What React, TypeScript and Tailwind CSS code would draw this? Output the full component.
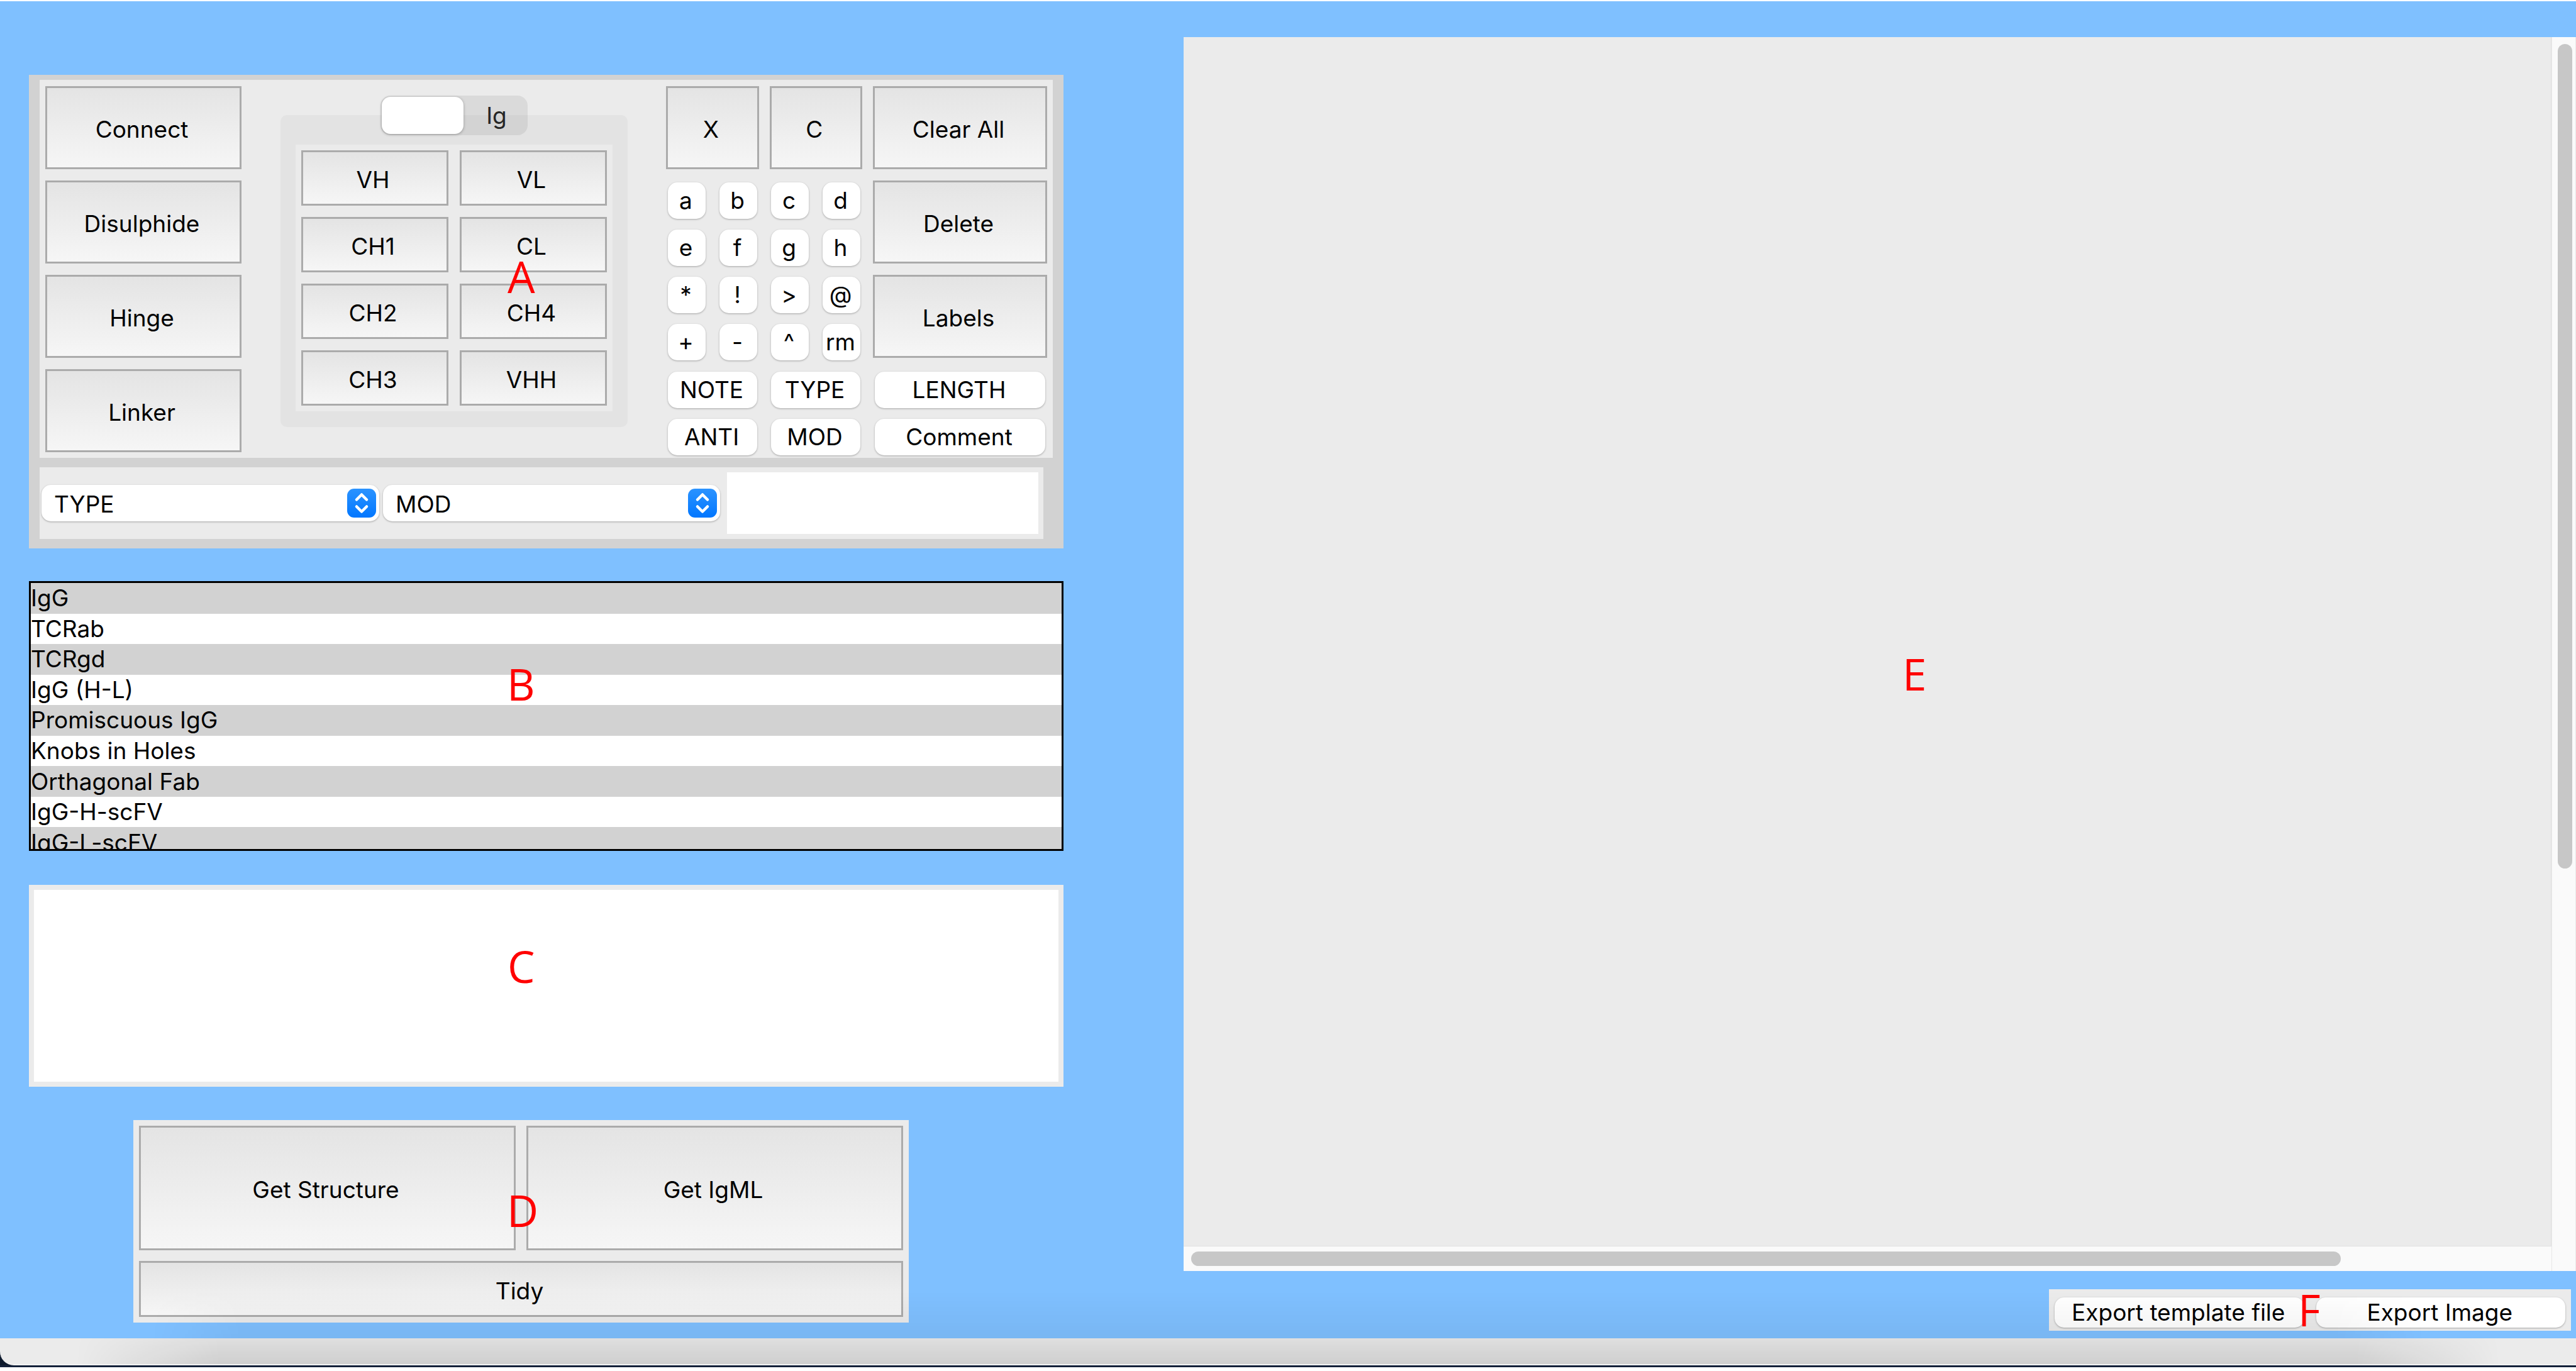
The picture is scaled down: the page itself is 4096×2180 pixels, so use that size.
import React from "react";

const FONT = "font-['Inter',sans-serif]";

function Flat({ children, className = "" }: { children: React.ReactNode; className?: string }) {
  return (
    <button
      type="button"
      className={`flex items-center justify-center border-[3px] border-[#ababab] bg-gradient-to-b from-[#e4e4e4] to-[#f6f6f6] pr-[5px] pt-[6px] ${className}`}
    >
      {children}
    </button>
  );
}

function Pill({ children, className = "h-[58px]" }: { children: React.ReactNode; className?: string }) {
  return (
    <button
      type="button"
      className={`flex items-center justify-center whitespace-nowrap rounded-[15px] bg-white pr-[3px] shadow-[0_1px_3px_rgba(0,0,0,0.3)] ${className}`}
    >
      {children}
    </button>
  );
}

function Marker({ children, className = "" }: { children: React.ReactNode; className?: string }) {
  return (
    <span
      className={`pointer-events-none absolute z-20 font-['Open_Sans',sans-serif] text-[69px] font-medium leading-[68px] text-[#ff0000] ${className}`}
    >
      {children}
    </span>
  );
}

function Picker({ label, className = "" }: { label: string; className?: string }) {
  return (
    <div className={`relative h-[58px] ${className}`}>
      <select
        aria-label={label}
        className="h-full w-full appearance-none rounded-[15px] bg-white pl-[20px] pt-[4px] shadow-[0_1px_3px_rgba(0,0,0,0.3)]"
      >
        <option>{label}</option>
      </select>
      <svg viewBox="0 0 46 46" className="pointer-events-none absolute right-[5px] top-[6px] size-[46px]" aria-hidden="true">
        <defs>
          <linearGradient id={`blue-${label}`} x1="0" y1="0" x2="0" y2="1">
            <stop offset="0" stopColor="#2b93ff" />
            <stop offset="1" stopColor="#0277ff" />
          </linearGradient>
        </defs>
        <rect width="46" height="46" rx="11" fill={`url(#blue-${label})`} />
        <path
          d="M15 17.500 L23 9.500 L31 17.500 M15 28.500 L23 36.500 L31 28.500"
          fill="none"
          stroke="white"
          strokeWidth="4.500"
          strokeLinecap="round"
          strokeLinejoin="round"
        />
      </svg>
    </div>
  );
}

const tools = ["Connect", "Disulphide", "Hinge", "Linker"];
const domains = ["VH", "VL", "CH1", "CL", "CH2", "CH4", "CH3", "VHH"];
const keys = ["a", "b", "c", "d", "e", "f", "g", "h", "*", "!", ">", "@", "+", "-", "^", "rm"];
const tags = ["NOTE", "TYPE", "ANTI", "MOD"];
const formats = [
  "IgG",
  "TCRab",
  "TCRgd",
  "IgG (H-L)",
  "Promiscuous IgG",
  "Knobs in Holes",
  "Orthagonal Fab",
  "IgG-H-scFV",
  "IgG-L-scFV",
];

function DomainPanel() {
  return (
    <section className="relative border-x-[17px] border-b-[15px] border-t-[8px] border-[#d2d2d2] bg-[#d2d2d2]">
      <div className="flex h-[601px] items-start justify-between bg-[#ebebeb] px-[9px] pt-[10px]">
        <div className="flex w-[312px] flex-col gap-[18px]">
          {tools.map((t) => (
            <Flat key={t} className="h-[132px]">
              {t}
            </Flat>
          ))}
        </div>

        <div className="flex w-[552px] flex-col items-center pt-[15px]">
          <div className="z-10 flex h-[63px] w-[234px] rounded-[16px] bg-black/7 p-[2px]">
            <button
              type="button"
              aria-label="Blank"
              className="w-[130px] rounded-[14px] bg-white shadow-[0_1px_4px_rgba(0,0,0,0.3)]"
            />
            <button type="button" className="flex-1 pl-[6px] text-[#262626]">
              Ig
            </button>
          </div>
          <div className="mt-[-32px] w-full rounded-[10px] bg-[#e3e3e3] px-[24px] pb-[25px] pt-[47px]">
            <div className="grid grid-cols-2 gap-[18px] bg-[#ebebeb] p-[9px]">
              {domains.map((d) => (
                <Flat key={d} className="h-[88px]">
                  {d}
                </Flat>
              ))}
            </div>
          </div>
        </div>

        <div className="flex w-[606px] gap-[17px]">
          <div className="flex flex-1 flex-col">
            <div className="grid h-[132px] grid-cols-2 gap-[17px]">
              <Flat>X</Flat>
              <Flat>C</Flat>
            </div>
            <div className="mt-[21px] grid grid-cols-4 gap-x-[22px] gap-y-[17px] px-[3px]">
              {keys.map((k) => (
                <Pill key={k}>{k}</Pill>
              ))}
            </div>
            <div className="mt-[18px] grid grid-cols-2 gap-x-[22px] gap-y-[17px] px-[3px]">
              {tags.map((t) => (
                <Pill key={t}>{t}</Pill>
              ))}
            </div>
          </div>
          <div className="flex w-[277px] flex-col gap-[18px]">
            <Flat className="h-[132px]">Clear All</Flat>
            <Flat className="h-[132px]">Delete</Flat>
            <Flat className="h-[132px]">Labels</Flat>
            <div className="flex flex-col gap-[17px] px-[3px] pt-[4px]">
              <Pill>LENGTH</Pill>
              <Pill>Comment</Pill>
            </div>
          </div>
        </div>
      </div>

      <div className="mr-[15px] mt-[15px] flex h-[114px] items-center bg-[#ebebeb] pl-[3px] pr-[8px]">
        <Picker label="TYPE" className="w-[537px]" />
        <Picker label="MOD" className="ml-[6px] w-[536px]" />
        <input aria-label="Comment text" className="ml-[11px] h-[98px] min-w-0 flex-1 bg-white px-4" />
      </div>
      <Marker className="left-[744px] top-[278px]">A</Marker>
    </section>
  );
}

function FormatList() {
  return (
    <section className="relative mt-[52px] h-[429px] overflow-hidden border-[3px] border-black">
      <ul className="grid h-[437px] grid-rows-9">
        {formats.map((f) => (
          <li key={f} className="flex items-center bg-white odd:bg-[#d2d2d2]">
            {f}
          </li>
        ))}
      </ul>
      <Marker className="left-[757px] top-[126px]">B</Marker>
    </section>
  );
}

function Actions() {
  return (
    <section className="relative ml-[166px] mt-[53px] grid w-[1233px] grid-cols-2 gap-[17px] bg-[#ebebeb] p-[9px]">
      <Flat className="h-[198px]">Get Structure</Flat>
      <Flat className="h-[198px]">Get IgML</Flat>
      <Flat className="col-span-2 h-[89px]">Tidy</Flat>
      <Marker className="left-[594px] top-[109px]">D</Marker>
    </section>
  );
}

function Canvas() {
  return (
    <section className="relative grid h-[1962px] grid-cols-[1fr_39px] grid-rows-[1fr_39px] bg-[#fafafa]">
      <div className="border-b border-r border-[#e2e2e2] bg-[#ebebeb]" />
      <div className="row-span-2 border-x border-[#e8e8e8] pl-[9px] pt-[11px]">
        <div className="h-[1311px] w-[23px] rounded-full bg-[#c7c7c7]" />
      </div>
      <div className="pl-[12px] pt-[8px]">
        <div className="h-[23px] w-[84.5%] rounded-full bg-[#c7c7c7]" />
      </div>
      <Marker className="left-[1143px] top-[978px]">E</Marker>
    </section>
  );
}

export default function App() {
  return (
    <div className={`${FONT} flex min-h-screen flex-col bg-white pt-[2px] text-[37px] leading-[48px] text-black`}>
      <main className="relative flex flex-1 items-start bg-[#7fc0ff]">
        <div className="ml-[46px] w-[1645px] pt-[117px]">
          <DomainPanel />
          <FormatList />
          <section className="relative mt-[54px]">
            <textarea
              aria-label="Sequence"
              className="block h-[321px] w-full resize-none border-[8px] border-[#ebebeb] bg-white"
            />
            <Marker className="left-[761px] top-[95px]">C</Marker>
          </section>
          <Actions />
        </div>
        <div className="ml-[191px] flex min-w-0 flex-1 flex-col pt-[57px]">
          <Canvas />
          <div className="relative mr-[8px] mt-[29px] flex w-[830px] gap-[19px] self-end bg-[#ebebeb] px-[9px] pb-[5px] pt-[13px]">
            <Pill className="h-[48px] flex-1">Export template file</Pill>
            <Pill className="h-[48px] flex-1">Export Image</Pill>
            <Marker className="left-[396px] top-[-2px]">F</Marker>
          </div>
        </div>
        <div className="pointer-events-none absolute bottom-0 left-[240px] right-[240px] h-[75px] bg-gradient-to-b from-transparent to-black/5 [mask-image:linear-gradient(to_right,transparent,black_4%,black_96%,transparent)]" />
      </main>
      <footer className="relative h-[43px] overflow-hidden bg-[#0e1a2d]">
        <div className="h-full rounded-bl-[22px] border-b-2 border-[#f2f2f2] bg-[#ebebeb]">
          <div className="mx-[120px] h-full bg-gradient-to-b from-black/5 to-black/12 [mask-image:linear-gradient(to_right,transparent,black_6%,black_94%,transparent)]" />
        </div>
      </footer>
      <div className="h-[3px] bg-[#14213a]" />
      <div className="h-[6px] bg-white" />
    </div>
  );
}
